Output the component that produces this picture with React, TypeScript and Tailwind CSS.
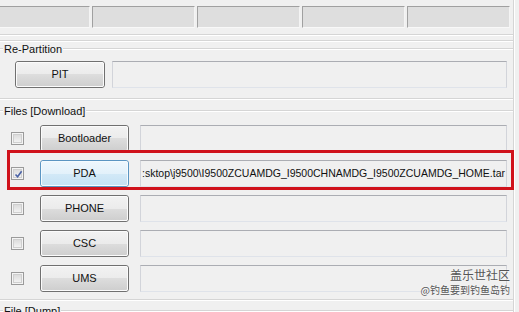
import React from "react";

function Line() {
  return (
    <div>
      <div className="h-px bg-[#d5d5d5]" />
      <div className="h-px bg-white" />
    </div>
  );
}

function GroupLabel({ text }: { text: string }) {
  return (
    <div className="flex h-[14px] items-center">
      <div className="w-[3px]">
        <Line />
      </div>
      <span className="px-px leading-[14px]">{text}</span>
      <div className="flex-1">
        <Line />
      </div>
    </div>
  );
}

function Btn({ label, active, w = 89 }: { label: string; active?: boolean; w?: number }) {
  return (
    <div
      style={{ width: w }}
      className={
        active
          ? "h-[27px] shrink-0 rounded-[3px] border border-[#5b95c2]"
          : "h-[27px] shrink-0 rounded-[3px] border border-[#707070]"
      }
    >
      <div
        className={
          active
            ? "flex h-full w-full items-center justify-center rounded-[2px] border border-[#f4fbff] bg-[linear-gradient(to_bottom,#eef7fd_0%,#e3f1fa_50%,#d3e9f7_50%,#c6e2f4_100%)] text-[11px] text-[#111]"
            : "flex h-full w-full items-center justify-center rounded-[2px] border border-[#fbfbfb] bg-[linear-gradient(to_bottom,#f2f2f2_0%,#ebebeb_50%,#dddddd_50%,#cfcfcf_100%)] text-[11px] text-[#111]"
        }
      >
        {label}
      </div>
    </div>
  );
}

function Field({ text, w }: { text?: string; w: number }) {
  return (
    <div
      style={{ width: w }}
      className="flex h-[27px] shrink-0 items-center overflow-hidden whitespace-nowrap border border-[#abadb3] border-l-[#d2d4da] border-r-[#d2d4da] border-b-[#dfe3ea] bg-[#f0f0f0] pl-px text-[10.5px] text-[#111]"
    >
      {text}
    </div>
  );
}

function Check({ checked }: { checked?: boolean }) {
  return (
    <div className="h-[13px] w-[13px] shrink-0 border border-[#9a9a9a] bg-[#f4f4f4] p-px">
      <div className="relative h-full w-full border border-[#cfcfcf] bg-[linear-gradient(to_bottom,#dcdcdc,#f2f2f2)]">
        {checked && (
          <svg viewBox="0 0 9 9" className="absolute left-0 top-0 h-[9px] w-[9px]">
            <path d="M1.5 4.5 L3.6 6.8 L7.6 1.2" fill="none" stroke="#4a62a6" strokeWidth="1.6" />
          </svg>
        )}
      </div>
    </div>
  );
}

function FileRow({ label, checked, active, text }: { label: string; checked?: boolean; active?: boolean; text?: string }) {
  return (
    <div className="flex h-[27px] items-center">
      <div className="ml-[11px]">
        <Check checked={checked} />
      </div>
      <div className="ml-[16px]">
        <Btn label={label} active={active} />
      </div>
      <div className="ml-[11px]">
        <Field w={367} text={text} />
      </div>
    </div>
  );
}

export default function App() {
  return (
    <div className="relative h-[312px] w-[519px] overflow-hidden bg-[#f0f0f0] font-['Liberation_Sans',Arial,sans-serif] text-[11px] text-[#111]">
      <div className="flex">
        <div className="w-[513px] shrink-0">
          {/* progress */}
          <div className="h-[34px] pt-[6px]">
            <div className="-ml-[13px] flex gap-[2px]">
              {[0, 1, 2, 3, 4].map((i) => (
                <div
                  key={i}
                  className="h-[22px] w-[103px] shrink-0 border border-[#a0a0a0] border-b-[#f8f8f8] border-r-[#f4f4f4] bg-[#dedede]"
                />
              ))}
            </div>
          </div>
          <Line />
          <div className="h-[4px]" />
          <Line />
          {/* re-partition */}
          <GroupLabel text="Re-Partition" />
          <div className="mt-[5px] flex h-[27px] items-center">
            <div className="ml-[15px]">
              <Btn label="PIT" w={90} />
            </div>
            <div className="ml-[7px]">
              <Field w={395} />
            </div>
          </div>
          <div className="mt-[10px]">
            <Line />
          </div>
          {/* files */}
          <div className="mt-[4px]">
            <GroupLabel text="Files [Download]" />
          </div>
          <div className="mt-[7px] flex flex-col gap-[8px]">
            <FileRow label="Bootloader" />
            <FileRow
              label="PDA"
              checked
              active
              text=":sktop\j9500\I9500ZCUAMDG_I9500CHNAMDG_I9500ZCUAMDG_HOME.tar"
            />
            <FileRow label="PHONE" />
            <FileRow label="CSC" />
            <FileRow label="UMS" />
          </div>
          <div className="mt-[7px]">
            <Line />
          </div>
          <div className="mt-[3px]">
            <GroupLabel text="File [Dump]" />
          </div>
        </div>
        <div className="w-px shrink-0 bg-[#d5d5d5]" />
        <div className="w-px shrink-0 bg-white" />
      </div>

      {/* red highlight annotation */}
      <div className="absolute left-[7px] top-[150px] h-[40px] w-[507px] border-[3px] border-[#d0121b]" />

      {/* watermark */}
      <div className="absolute right-[9px] top-[267px] flex flex-col items-end font-['Noto_Sans_CJK_SC',sans-serif] text-[#555] [text-shadow:0_0_2px_#fff]">
        <div className="text-[12px] leading-[16px]">盖乐世社区</div>
        <div className="text-[10px] leading-[13px]">@钓鱼要到钓鱼岛钓</div>
      </div>
    </div>
  );
}
